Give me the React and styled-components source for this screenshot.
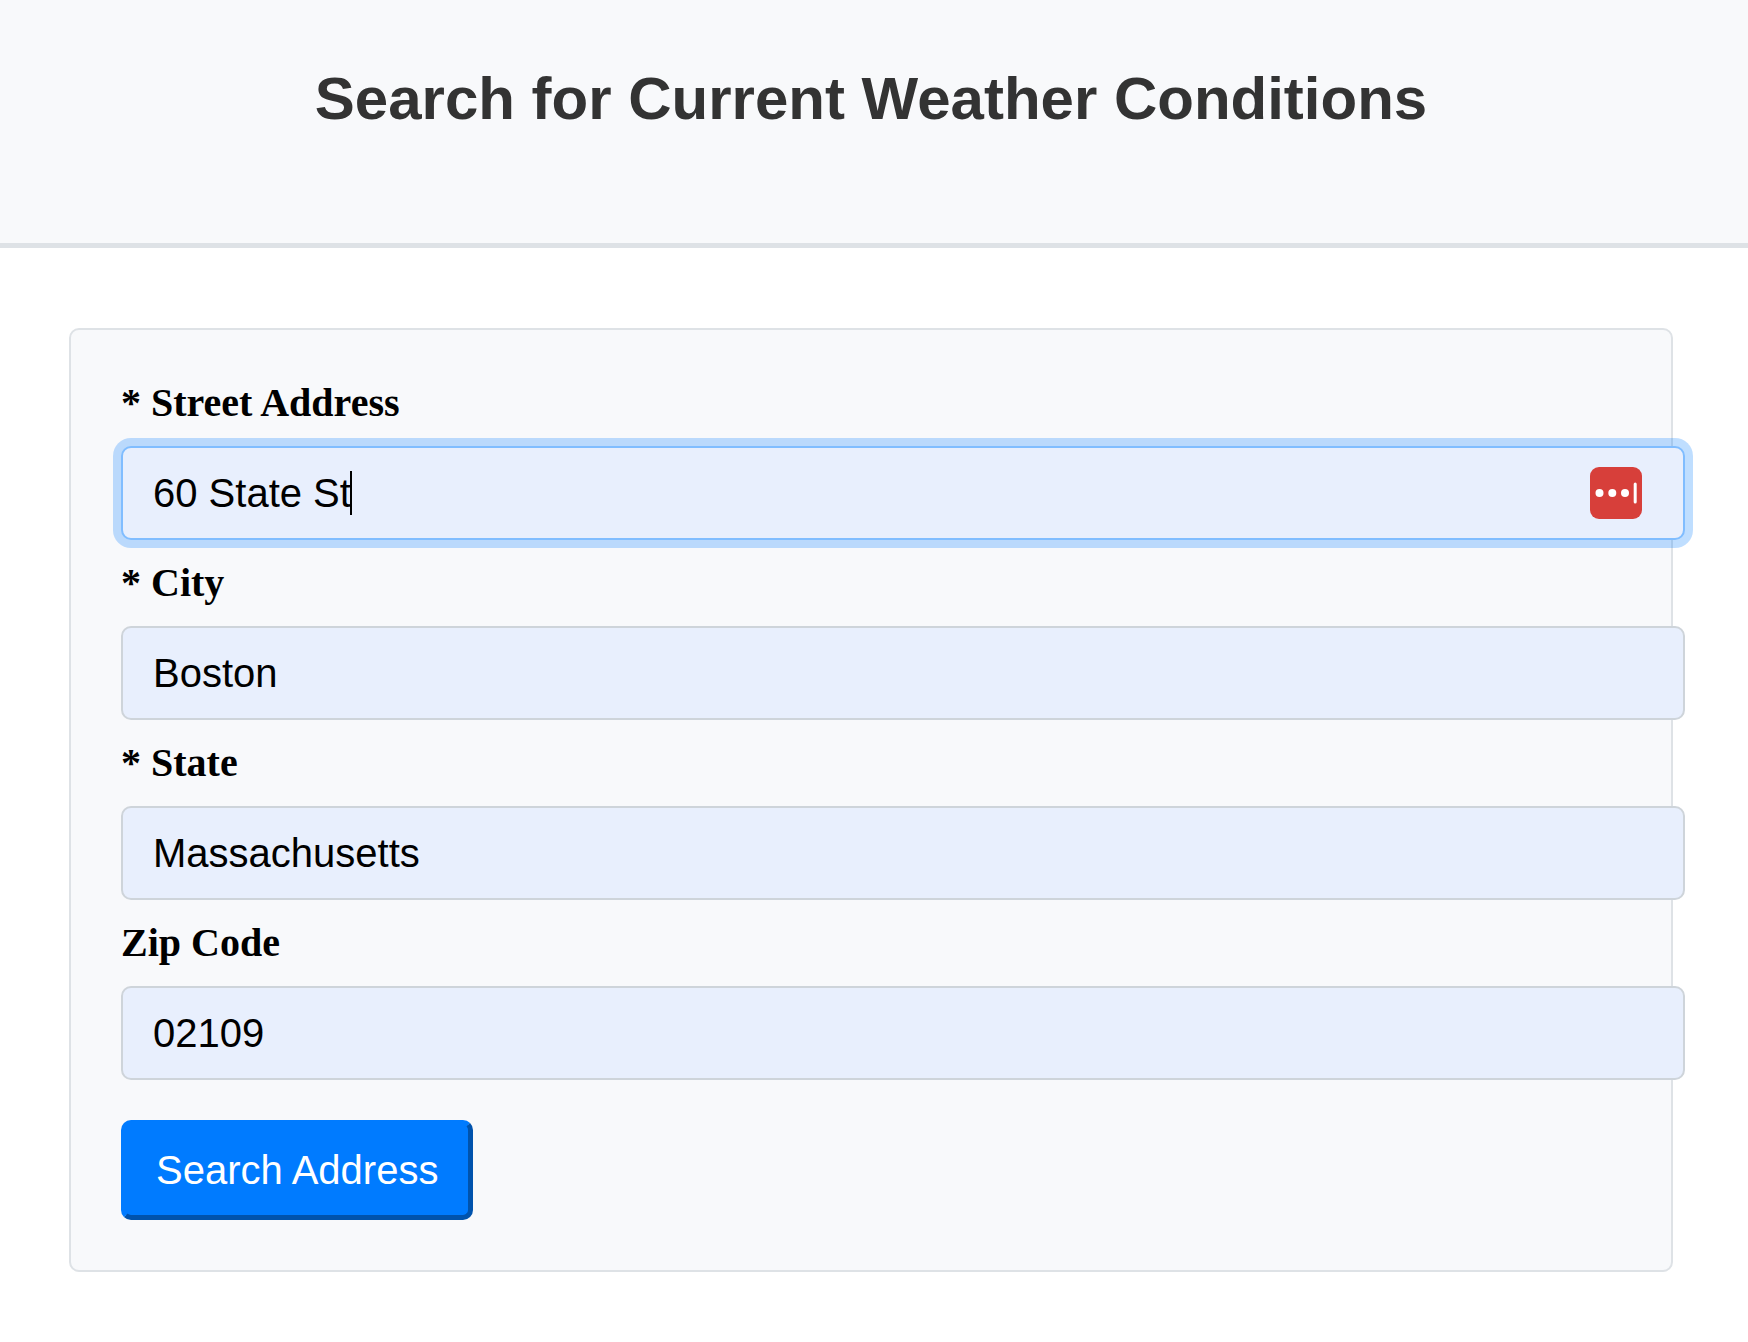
import React, { useState } from 'react';
import styled, { createGlobalStyle, css } from 'styled-components';

const GlobalStyle = createGlobalStyle`
  body {
    margin: 0;
    background: #ffffff;
    color: #000000;
    font-family: "Liberation Serif", "Times New Roman", serif;
  }
`;

const Header = styled.header`
  padding: 64px 6px 110px 0;
  border-bottom: 5px solid #dee2e6;
  background: #f8f9fb;
  text-align: center;
`;

const Title = styled.h1`
  margin: 0;
  color: #333333;
  font: bold 60px/69px "Liberation Sans", Arial, sans-serif;
`;

const Main = styled.main`
  padding: 80px 75px 70px 69px;
`;

const Card = styled.form`
  display: flex;
  flex-direction: column;
  gap: 20px;
  padding: 50px;
  border: 2px solid #dee2e6;
  border-radius: 10px;
  background: #f8f9fb;
`;

const Field = styled.div`
  display: flex;
  flex-direction: column;
  gap: 20px;
`;

const Label = styled.label`
  font-size: 40px;
  font-weight: bold;
  line-height: 46px;
`;

const Control = styled.div`
  position: relative;
  width: calc(100% + 64px);
`;

const Input = styled.input`
  display: block;
  box-sizing: border-box;
  width: 100%;
  margin: 0;
  padding: 22px 30px;
  border: 2px solid #ced4da;
  border-radius: 10px;
  outline: none;
  background: #e8effd;
  color: #000000;
  caret-color: transparent;
  font: 40px/46px "Liberation Sans", Arial, sans-serif;
  ${({ $active }) =>
    $active &&
    css`
      border-color: #80bdff;
      box-shadow: 0 0 0 8px rgba(0, 123, 255, 0.25);
    `}
`;

const Caret = styled.span`
  position: absolute;
  top: 25px;
  left: 229px;
  width: 2px;
  height: 44px;
  background: #000000;
  pointer-events: none;
`;

const FillButton = styled.button`
  position: absolute;
  top: 21px;
  right: 43px;
  width: 52px;
  height: 52px;
  padding: 0;
  border: 0;
  border-radius: 9px;
  background: #d73f3a;
`;

const FillIcon = styled.svg`
  display: block;
`;

const SubmitButton = styled.button`
  align-self: flex-start;
  margin: 20px 0 0;
  padding: 22px 30px;
  border: 5px solid;
  border-color: #007bff #0053ad #0053ad #007bff;
  border-radius: 10px;
  background: #007bff;
  color: #ffffff;
  font: 40px/46px "Liberation Sans", Arial, sans-serif;
  cursor: pointer;
`;

const FIELDS = [
  { id: 'street', label: '* Street Address', value: '60 State St', active: true },
  { id: 'city', label: '* City', value: 'Boston' },
  { id: 'state', label: '* State', value: 'Massachusetts' },
  { id: 'zip', label: 'Zip Code', value: '02109' },
];

function AddressField({ id, label, value, active }) {
  const [text, setText] = useState(value);
  return (
    <Field>
      <Label htmlFor={id}>{label}</Label>
      <Control>
        <Input
          id={id}
          type="text"
          value={text}
          onChange={(event) => setText(event.target.value)}
          $active={active}
        />
        {active && (
          <>
            <Caret />
            <FillButton type="button" aria-label="Fill">
              <FillIcon width="52" height="52" viewBox="0 0 52 52" fill="#ffffff">
                <circle cx="9.5" cy="26" r="4" />
                <circle cx="22.3" cy="26" r="4" />
                <circle cx="35" cy="26" r="4" />
                <rect x="43.7" y="15.5" width="3" height="21" rx="1.5" />
              </FillIcon>
            </FillButton>
          </>
        )}
      </Control>
    </Field>
  );
}

export default function App() {
  return (
    <>
      <GlobalStyle />
      <Header>
        <Title>Search for Current Weather Conditions</Title>
      </Header>
      <Main>
        <Card onSubmit={(event) => event.preventDefault()}>
          {FIELDS.map((field) => (
            <AddressField key={field.id} {...field} />
          ))}
          <SubmitButton type="submit">Search Address</SubmitButton>
        </Card>
      </Main>
    </>
  );
}
